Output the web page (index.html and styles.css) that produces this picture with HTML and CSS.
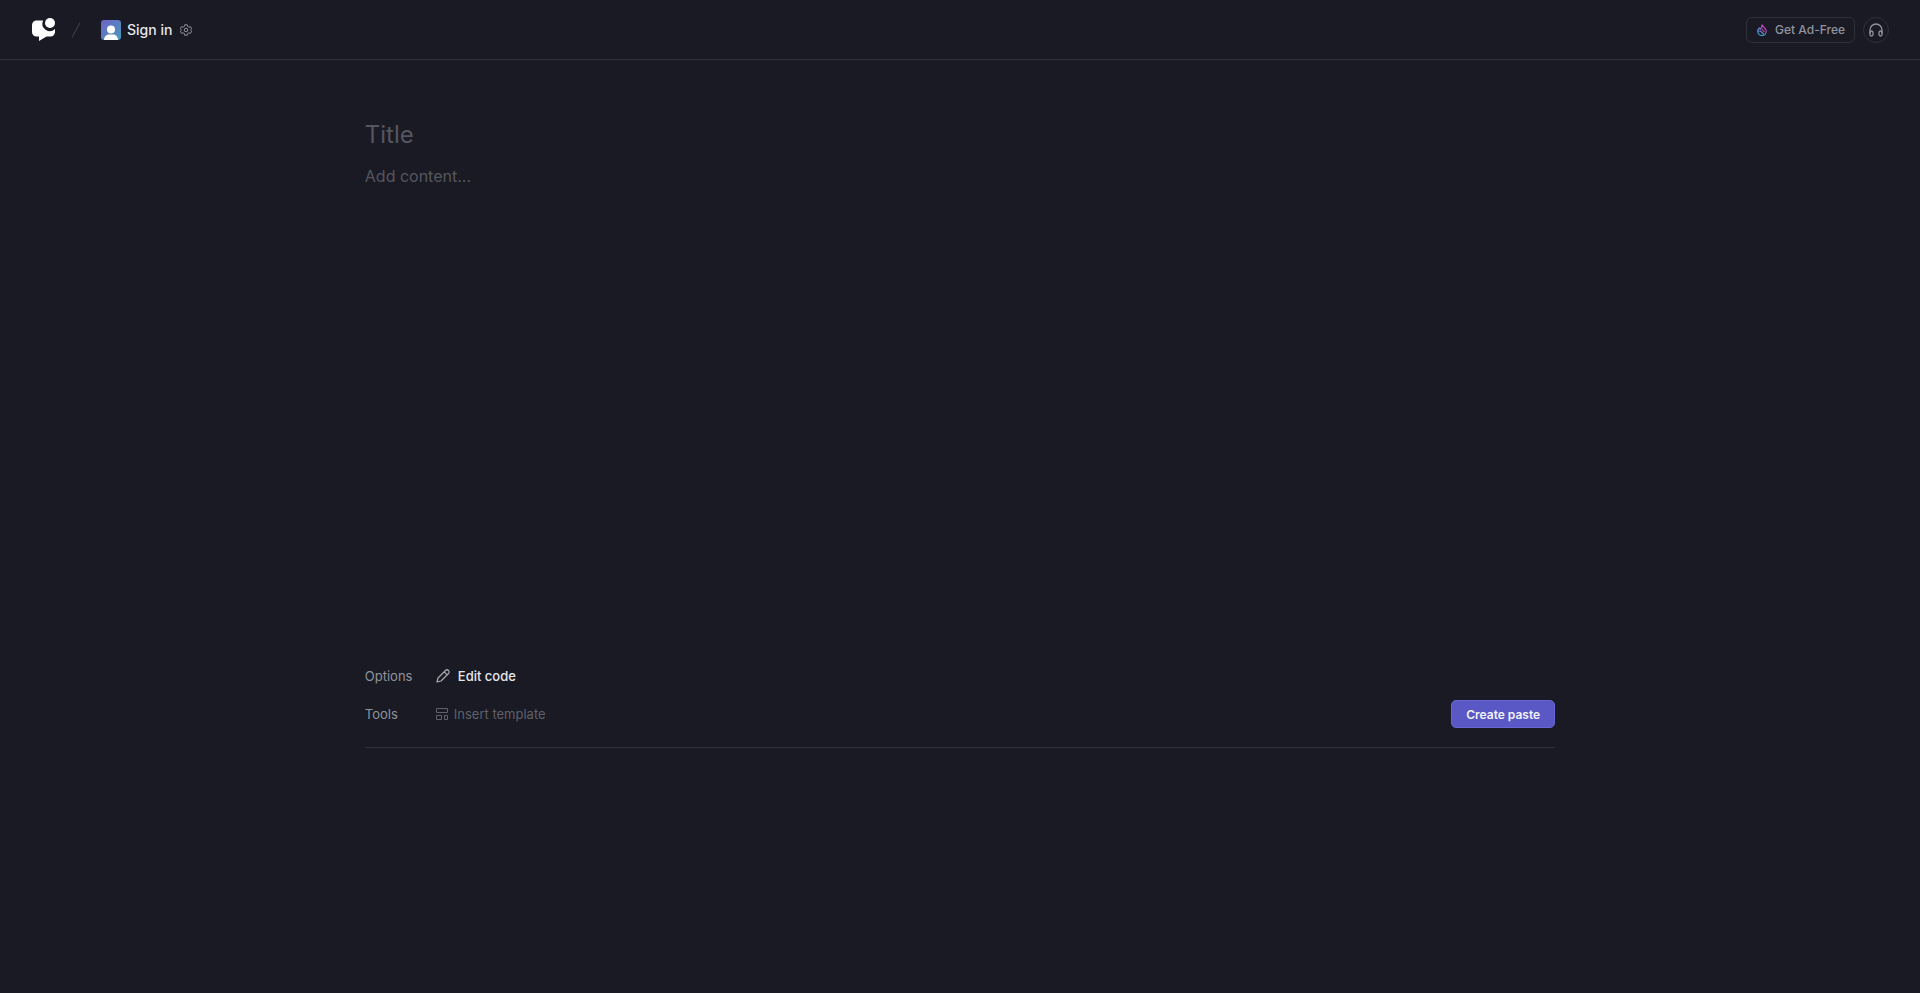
FILE: index.html
```html
<!DOCTYPE html>
<html lang="en">
<head>
<meta charset="UTF-8">
<meta name="viewport" content="width=device-width, initial-scale=1.0">
<title>New paste</title>
<link rel="stylesheet" href="styles.css">
</head>
<body>
<header class="topbar">
    <nav class="topbar-left">
        <a class="logo" href="/" aria-label="Home">
            <svg width="24" height="24" viewBox="0 0 24 24" fill="#fff">
                <path d="M4.500 2.500h6.600A7.500 7.500 0 0 0 23 11.100V14a4.500 4.500 0 0 1-4.500 4.500h-4L7 23v-4.500H4.500A4.500 4.500 0 0 1 0 14V7a4.500 4.500 0 0 1 4.500-4.500z"/>
                <circle cx="18" cy="5" r="5"/>
            </svg>
        </a>
        <svg class="slash" width="10" height="16" viewBox="0 0 10 16" fill="none" stroke="#43444e">
            <path d="M9 .5L1 15.500"/>
        </svg>
        <a class="sign-in" href="/login">
            <svg class="avatar" width="20" height="20" viewBox="0 0 20 20">
                <defs>
                    <linearGradient id="sky" x1="0" y1="0" x2="1" y2="1">
                        <stop offset="0" stop-color="#6f62c6"/>
                        <stop offset="1" stop-color="#479bbd"/>
                    </linearGradient>
                </defs>
                <rect width="20" height="20" fill="url(#sky)"/>
                <circle cx="10" cy="9.500" r="4" fill="#fff"/>
                <path d="M3 20c0-3.500 2.500-5.500 5-5.500h4c2.500 0 5 2 5 5.500z" fill="#fff"/>
            </svg>
            <span>Sign in</span>
        </a>
        <button class="settings" type="button" aria-label="Settings">
            <svg width="12" height="12" viewBox="0 0 24 24" fill="none" stroke="currentColor" stroke-width="2" stroke-linejoin="round">
                <path d="M9.500 1.500h5l.8 3.400 2.400 1.400 3.300-1 2.500 4.300-2.500 2.400 2.500 2.400-2.500 4.300-3.300-1-2.400 1.400-.8 3.400h-5l-.8-3.400-2.400-1.400-3.300 1-2.500-4.300L3 12 .5 9.600 3 5.300l3.300 1 2.400-1.400z"/>
                <circle cx="12" cy="12" r="3.500"/>
            </svg>
        </button>
    </nav>
    <div class="topbar-right">
        <a class="ad-free" href="/pro">
            <svg width="10" height="12" viewBox="0 0 20 24" fill="none" stroke="url(#flame)" stroke-width="2.400" stroke-linecap="round" stroke-linejoin="round">
                <defs>
                    <linearGradient id="flame" x1="0.800" y1="0" x2="0.200" y2="1">
                        <stop offset="0.300" stop-color="#c046c0"/>
                        <stop offset="0.700" stop-color="#3fa3d3"/>
                    </linearGradient>
                </defs>
                <path d="M10 1.500c1 4 8.500 6.500 8.500 13a8.500 8.500 0 0 1-17 0c0-3 1.500-5 3-6.500l2 2.500c2.500-2.500 3.500-5 3.500-9z"/>
                <path d="M2 14h5l6 6M10 10l4 5"/>
            </svg>
            <span>Get Ad-Free</span>
        </a>
        <button class="support" type="button" aria-label="Support">
            <svg width="14" height="14" viewBox="0 0 14 14" fill="none" stroke="currentColor" stroke-width="1.300" stroke-linecap="round" stroke-linejoin="round">
                <path d="M1 10V7a6 6 0 0 1 12 0v3"/>
                <path d="M1 9.500a1.500 1.500 0 0 1 3 0v2a1.500 1.500 0 0 1-3 0zM10 9.500a1.500 1.500 0 0 1 3 0v2a1.500 1.500 0 0 1-3 0z"/>
            </svg>
        </button>
    </div>
</header>

<main>
    <form class="paste">
        <input class="paste-title" type="text" placeholder="Title" aria-label="Title">
        <textarea class="paste-content" placeholder="Add content..." aria-label="Content"></textarea>
        <div class="row">
            <span class="row-label">Options</span>
            <button class="edit-code" type="button">
                <svg width="14" height="14" viewBox="0 0 14 14" fill="none" stroke="#a9aab2" stroke-width="1.200" stroke-linejoin="round">
                    <path d="M1 13l1-4L9.500 1.500a1.800 1.800 0 0 1 3 3L5 12zM8.200 2.800l3 3"/>
                </svg>
                <span>Edit code</span>
            </button>
        </div>
        <div class="row">
            <span class="row-label">Tools</span>
            <button class="insert-template" type="button">
                <svg width="12" height="12" viewBox="0 0 12 12" fill="none" stroke="currentColor">
                    <path d="M.5.5h11v4H.5zM.5 7.500h5v4h-5zM8.500 7.500h3v4h-3z"/>
                </svg>
                <span>Insert template</span>
            </button>
            <button class="create" type="submit">Create paste</button>
        </div>
    </form>
</main>
</body>
</html>
```

FILE: styles.css
```css
* {
    box-sizing: border-box;
}
body {
    margin: 0;
    background-color: #191a23;
    color: #e6e6ec;
    font-family: Inter, "Liberation Sans", sans-serif;
    font-size: 13px;
}
a {
    color: inherit;
    text-decoration: none;
}
button, input, textarea {
    padding: 0;
    border: none;
    background: none;
    color: inherit;
    font: inherit;
}
button {
    cursor: pointer;
}
svg {
    display: block;
    flex-shrink: 0;
}

/* Top bar */
.topbar {
    display: flex;
    justify-content: space-between;
    align-items: center;
    height: 60px;
    padding: 0 31px 0 32px;
    border-bottom: 1px solid #30313b;
}
.topbar-left, .topbar-right, .sign-in, .ad-free {
    display: flex;
    align-items: center;
}
.slash {
    margin: 0 20px 0 15px;
}
.sign-in {
    gap: 6px;
    font-size: 14px;
    font-weight: 500;
}
.avatar {
    border-radius: 3px;
}
.settings {
    margin-left: 8px;
    color: #92939d;
}
.topbar-right {
    gap: 8px;
    color: #92939d;
}
.ad-free {
    gap: 8px;
    height: 26px;
    padding: 0 9px 0 10px;
    border: 1px solid #30313b;
    border-radius: 6px;
    font-size: 12px;
    font-weight: 500;
}
.support {
    display: flex;
    align-items: center;
    justify-content: center;
    width: 26px;
    height: 26px;
    border: 1px solid #30313b;
    border-radius: 50%;
}

/* Paste form */
.paste {
    display: flex;
    flex-direction: column;
    width: 62%;
    margin: 0 auto;
    padding: 56px 0 14px;
    border-bottom: 1px solid #30313b;
}
.paste-title {
    height: 36px;
    font-size: 24px;
}
.paste-content {
    height: 493px;
    margin: 12px 0 0;
    font-size: 16px;
    line-height: 24px;
    resize: none;
}
.paste-title:focus, .paste-content:focus {
    outline: none;
}
::placeholder {
    color: #55565f;
    opacity: 1;
}
.row {
    display: flex;
    align-items: center;
    height: 38px;
}
.row-label {
    width: 71px;
    color: #92939d;
}
.edit-code, .insert-template {
    display: flex;
    align-items: center;
}
.edit-code {
    gap: 8px;
    font-weight: 500;
}
.insert-template {
    gap: 6px;
    color: #5f606a;
}
.create {
    height: 28px;
    margin-left: auto;
    padding: 0 14px;
    border: 1px solid #6868d2;
    border-radius: 5px;
    background-color: #5958c4;
    color: #f1f1fc;
    font-size: 12px;
    font-weight: 600;
}
```
